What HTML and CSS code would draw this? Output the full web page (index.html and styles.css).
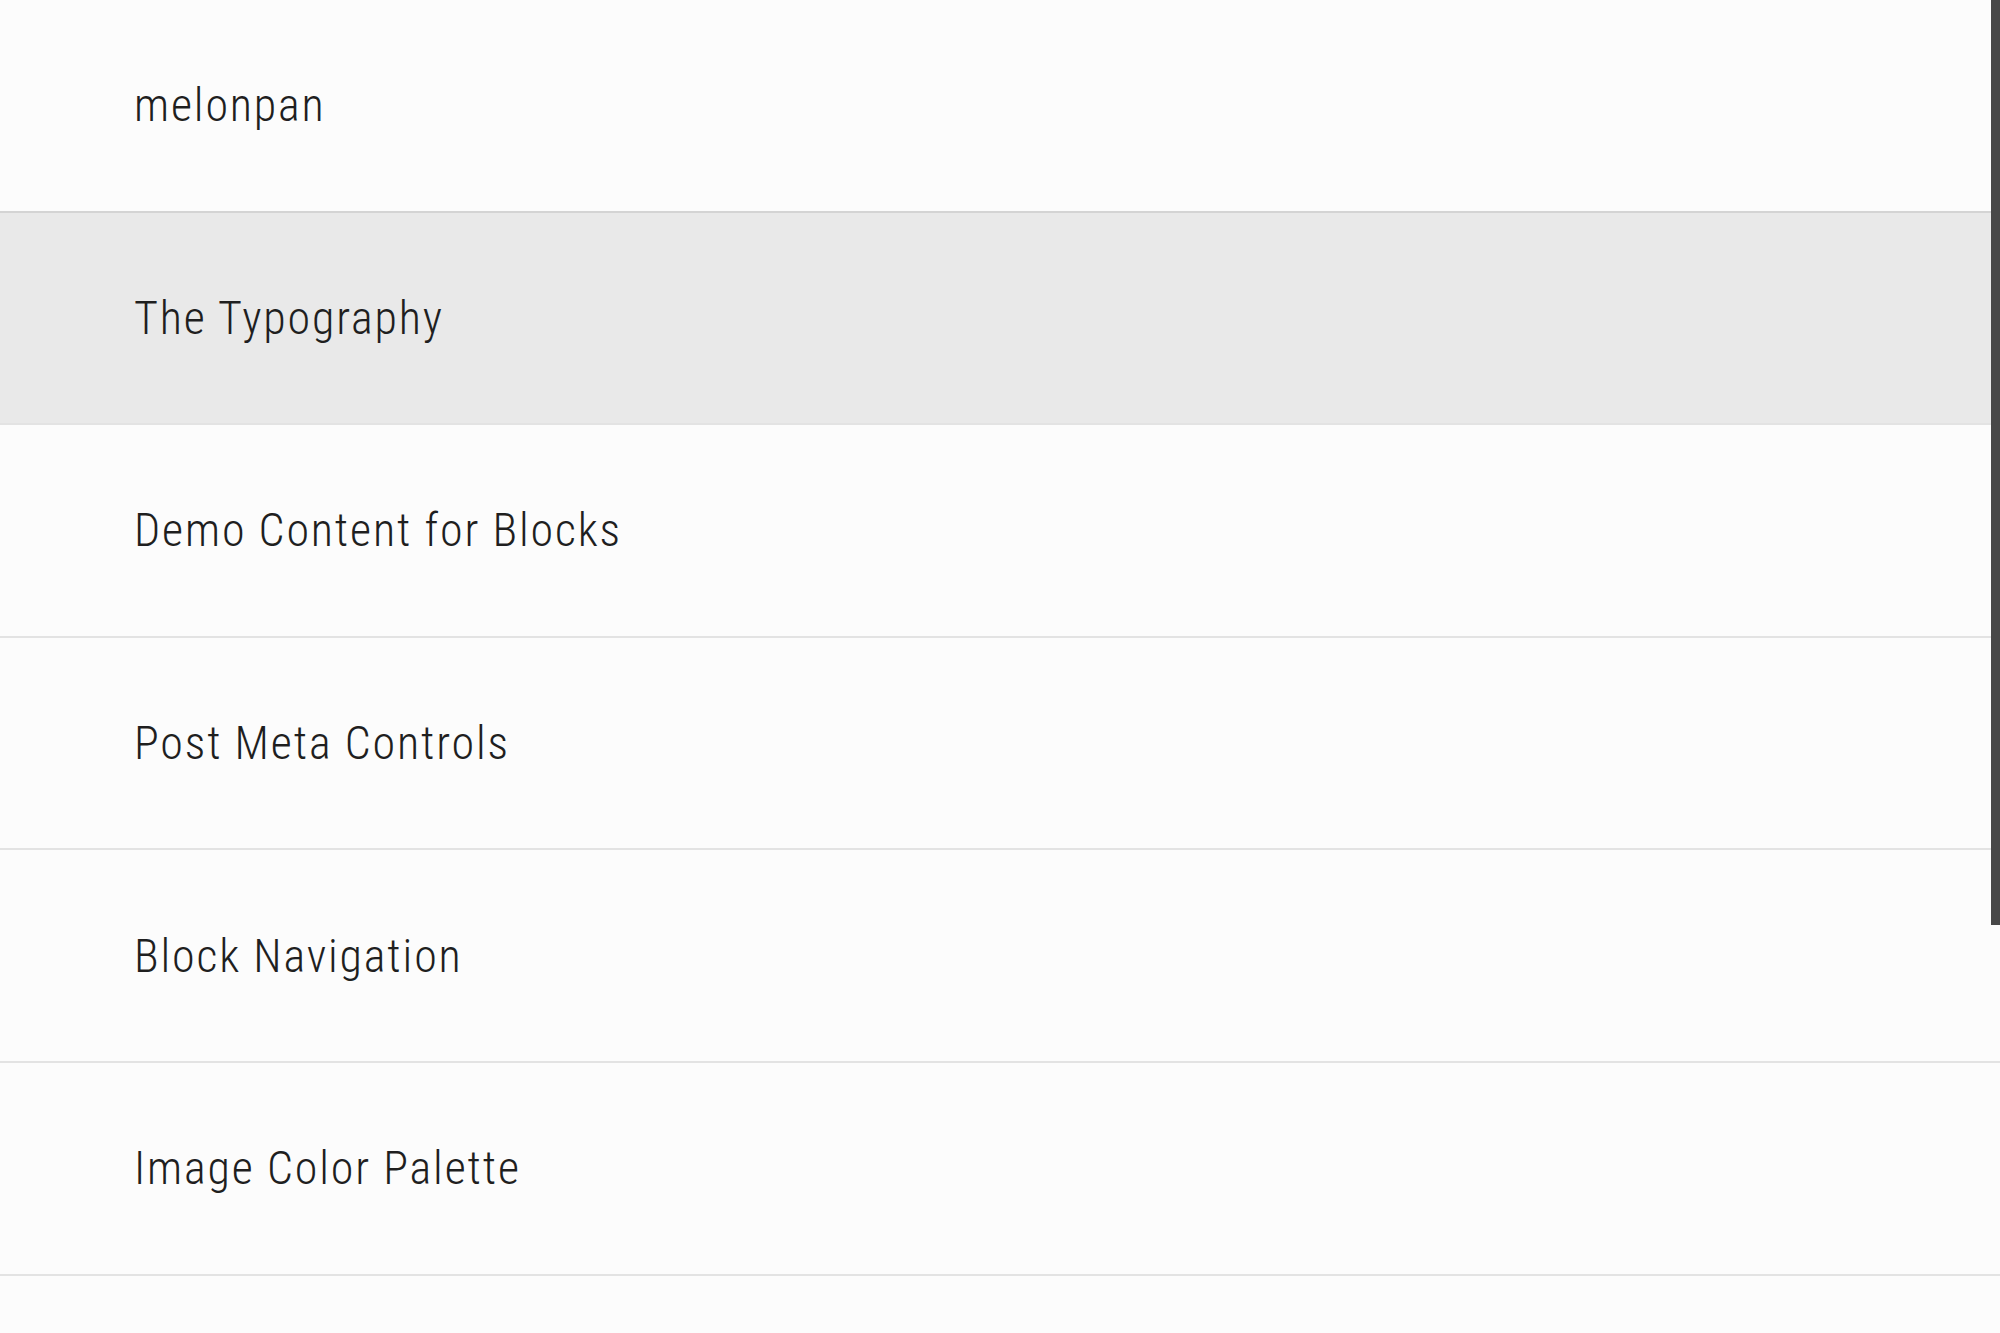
FILE: index.html
```html
<!DOCTYPE html>
<html>
<head>
<meta charset="utf-8">
<link rel="stylesheet" href="styles.css">
</head>
<body>
<div class="list">
  <div class="row">melonpan</div>
  <div class="row selected">The Typography</div>
  <div class="row">Demo Content for Blocks</div>
  <div class="row">Post Meta Controls</div>
  <div class="row">Block Navigation</div>
  <div class="row">Image Color Palette</div>
  <div class="row last"></div>
</div>
<div class="scrollbar"></div>
</body>
</html>
```

FILE: styles.css
```css
html, body {
  margin: 0;
  padding: 0;
  background: #fcfcfc;
  overflow: hidden;
  height: 1333px;
}
.list {
  display: flex;
  flex-direction: column;
  height: 1333px;
  overflow: hidden;
}
.row {
  box-sizing: border-box;
  height: 212.6px;
  flex: 0 0 212.6px;
  border-bottom: 2px solid #e3e3e3;
  display: flex;
  align-items: center;
  padding-left: 134px;
  font-family: Roboto, "Liberation Sans", sans-serif;
  font-size: 46px;
  font-weight: 300;
  font-stretch: 80%;
  letter-spacing: 1.85px;
  color: #1f1f1f;
}
.row.last {
  flex: 1 1 auto;
  border-bottom: none;
}
.row.selected {
  background: #e9e9e9;
}
.row:first-child {
  border-bottom-color: #d4d4d4;
}
.scrollbar {
  position: fixed;
  top: 0;
  right: 0;
  width: 9px;
  height: 925px;
  background: #484848;
}
```
